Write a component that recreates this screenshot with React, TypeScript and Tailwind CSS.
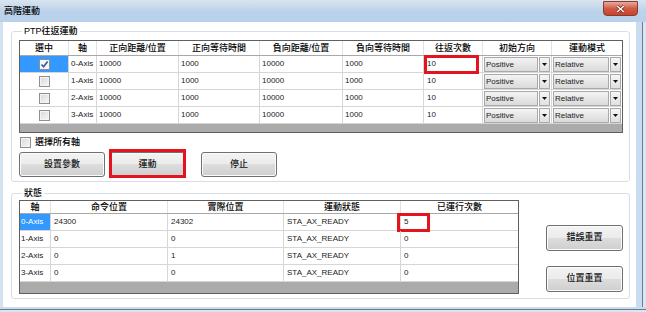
import clsx from "clsx";

const FONT = "font-['Liberation_Sans','Noto_Sans_CJK_TC',sans-serif]";
const BTN =
  "flex items-center justify-center rounded-[3px] border border-[#707070] bg-[linear-gradient(#f3f3f3,#ebebeb_50%,#dddddd_50%,#cfcfcf)] text-[9px] font-medium text-[#111] shadow-[inset_0_0_0_1px_#fbfbfb]";

const ptpHeads = [
  "選中",
  "軸",
  "正向距離/位置",
  "正向等待時間",
  "負向距離/位置",
  "負向等待時間",
  "往返次數",
  "初始方向",
  "運動模式",
];
const ptpW = [
  "w-[49px]",
  "w-[28px]",
  "w-[82px]",
  "w-[81px]",
  "w-[83px]",
  "w-[81px]",
  "w-[59px]",
  "w-[69px]",
  "flex-1",
];

const stHeads = ["軸", "命令位置", "實際位置", "運動狀態", "已運行次數"];
const stW = ["w-[31px]", "w-[117px]", "w-[116px]", "w-[117px]", "flex-1"];
const stRows = [
  ["0-Axis", "24300", "24302", "STA_AX_READY", "5"],
  ["1-Axis", "0", "0", "STA_AX_READY", "0"],
  ["2-Axis", "0", "1", "STA_AX_READY", "0"],
  ["3-Axis", "0", "0", "STA_AX_READY", "0"],
];

function CheckBox({ checked = false }: { checked?: boolean }) {
  return (
    <span
      className={clsx(
        "flex h-[11px] w-[11px] items-center justify-center border border-[#8e8f8f]",
        checked
          ? "bg-[#f4f6fa]"
          : "bg-gradient-to-br from-[#d6d8dc] to-[#f8f8f8] shadow-[inset_0_0_0_1px_#f4f4f4]"
      )}
    >
      {checked && (
        <svg width="9" height="9" viewBox="0 0 9 9">
          <path
            d="M1.5 4.5 L3.6 6.8 L7.6 1.6"
            fill="none"
            stroke="#3a5a9c"
            strokeWidth="1.7"
          />
        </svg>
      )}
    </span>
  );
}

function Combo({ value }: { value: string }) {
  return (
    <div className="flex h-[15px] w-full gap-[1px]">
      <span className="flex-1 border border-[#a9a9a9] bg-gradient-to-b from-[#f4f4f4] to-[#dadada] pl-[1px] text-[8px] leading-[13px] text-[#222]">
        {value}
      </span>
      <span className="flex w-[11px] items-center justify-center border border-[#a9a9a9] bg-gradient-to-b from-[#f6f6f6] to-[#e0e0e0]">
        <svg width="5" height="3" viewBox="0 0 5 3">
          <path d="M0 0h5L2.5 3z" fill="#111" />
        </svg>
      </span>
    </div>
  );
}

function RedMark({ className }: { className: string }) {
  return (
    <span
      className={clsx(
        "pointer-events-none absolute border-[3px] border-[#e3141d]",
        className
      )}
    />
  );
}

function PtpGrid() {
  return (
    <div className="flex h-[93px] w-[604px] flex-col border border-[#5f5f5f] bg-[#ababab]">
      <div className="flex h-[15px] border-b border-[#a8a8a8] bg-white">
        {ptpHeads.map((h, i) => (
          <div
            key={h}
            className={clsx(
              "text-center text-[9px] font-medium leading-[14px]",
              ptpW[i],
              i < 8 && "border-r border-[#e2e2e2]"
            )}
          >
            {h}
          </div>
        ))}
      </div>
      {[0, 1, 2, 3].map((r) => (
        <div
          key={r}
          className="flex h-[17px] border-b border-[#d6d6d6] bg-white text-[8px] leading-[16px] text-[#222]"
        >
          <div
            className={clsx(
              "flex items-center justify-center border-r border-[#d6d6d6]",
              ptpW[0],
              r === 0 && "bg-[#3399ff]"
            )}
          >
            <CheckBox checked={r === 0} />
          </div>
          <div className={clsx("border-r border-[#d6d6d6] pl-[2px]", ptpW[1])}>
            {r}-Axis
          </div>
          <div className={clsx("border-r border-[#d6d6d6] pl-[2px]", ptpW[2])}>
            10000
          </div>
          <div className={clsx("border-r border-[#d6d6d6] pl-[2px]", ptpW[3])}>
            1000
          </div>
          <div className={clsx("border-r border-[#d6d6d6] pl-[2px]", ptpW[4])}>
            10000
          </div>
          <div className={clsx("border-r border-[#d6d6d6] pl-[2px]", ptpW[5])}>
            1000
          </div>
          <div
            className={clsx(
              "relative border-r border-[#d6d6d6] pl-[3px]",
              ptpW[6]
            )}
          >
            10
            {r === 0 && (
              <RedMark className="-top-[1px] left-0 h-[19px] w-[55px]" />
            )}
          </div>
          <div
            className={clsx(
              "flex items-center border-r border-[#d6d6d6] px-[1px]",
              ptpW[7]
            )}
          >
            <Combo value="Positive" />
          </div>
          <div className={clsx("flex items-center px-[1px]", ptpW[8])}>
            <Combo value="Relative" />
          </div>
        </div>
      ))}
    </div>
  );
}

function StatusGrid() {
  return (
    <div className="flex h-[94px] w-[500px] flex-col border border-[#5f5f5f] bg-[#ababab]">
      <div className="flex h-[13px] border-b border-[#a8a8a8] bg-white">
        {stHeads.map((h, i) => (
          <div
            key={h}
            className={clsx(
              "text-center text-[9px] font-medium leading-[12px]",
              stW[i],
              i < 4 && "border-r border-[#e2e2e2]"
            )}
          >
            {h}
          </div>
        ))}
      </div>
      {stRows.map((row, r) => (
        <div
          key={r}
          className="flex h-[17px] border-b border-[#d6d6d6] bg-white text-[8px] leading-[16px] text-[#222]"
        >
          {row.map((c, i) => (
            <div
              key={i}
              className={clsx(
                "relative",
                stW[i],
                i < 4 && "border-r border-[#d6d6d6]",
                i === 0 ? "pl-[1px]" : "pl-[3px]",
                i === 0 && r === 0 && "bg-[#3399ff] text-white"
              )}
            >
              {c}
              {i === 4 && r === 0 && (
                <RedMark className="-left-[4px] -top-[1px] h-[19px] w-[33px]" />
              )}
            </div>
          ))}
        </div>
      ))}
    </div>
  );
}

function TitleBar() {
  return (
    <div className="flex h-[22px] bg-gradient-to-b from-[#d9e4ef] via-[#bcd3eb] to-[#b8d0ea]">
      <span className="self-center pl-[4px] text-[9px] font-medium leading-[12px] text-black">
        高階運動
      </span>
      <div className="ml-auto mr-[8px] mt-[1px] flex h-[15px] w-[35px] items-center justify-center rounded-b-[4px] border border-[#8a3b30] bg-gradient-to-b from-[#e9a99b] via-[#d15a45] to-[#c7432c]">
        <svg width="9" height="8" viewBox="0 0 9 8">
          <path
            d="M1 1 L8 7 M8 1 L1 7"
            stroke="#5a1a12"
            strokeWidth="2.6"
          />
          <path d="M1 1 L8 7 M8 1 L1 7" stroke="#fff" strokeWidth="1.6" />
        </svg>
      </div>
    </div>
  );
}

export default function App() {
  return (
    <div
      className={clsx(
        "flex h-[312px] w-[646px] flex-col overflow-hidden bg-[#c5d9ef] text-black",
        FONT
      )}
    >
      <TitleBar />
      <div className="flex h-[285px]">
        <div className="w-[3px] bg-[#d4e3f2]" />
        <div className="flex w-[633px] flex-col bg-white pl-[8px]">
          <fieldset className="mt-[2px] w-[619px] rounded-[3px] border border-[#d5dfe5] pb-[4px] pl-[7px]">
            <legend className="ml-[3px] px-[2px] text-[9px] font-medium leading-[14px]">
              PTP往返運動
            </legend>
            <div className="pt-[2px]">
              <PtpGrid />
            </div>
            <div className="mt-[2px] flex h-[14px] items-center gap-[4px] pl-[1px]">
              <CheckBox />
              <span className="text-[9px] font-medium leading-[12px]">
                選擇所有軸
              </span>
            </div>
            <div className="mt-[3px] flex h-[25px]">
              <div className={clsx(BTN, "w-[86px]")}>設置參數</div>
              <div className="relative ml-[5px]">
                <div className={clsx(BTN, "h-[25px] w-[75px]")}>運動</div>
                <RedMark className="-left-[1px] -top-[3px] h-[29px] w-[77px]" />
              </div>
              <div className={clsx(BTN, "ml-[16px] w-[76px]")}>停止</div>
            </div>
          </fieldset>
          <fieldset className="mt-[4px] w-[619px] rounded-[3px] border border-[#d5dfe5] pb-[4px] pl-[7px]">
            <legend className="ml-[3px] px-[2px] text-[9px] font-medium leading-[14px]">
              狀態
            </legend>
            <div className="flex">
              <StatusGrid />
              <div className="ml-[27px] flex flex-col pt-[25px]">
                <div className={clsx(BTN, "h-[26px] w-[77px]")}>錯誤重置</div>
                <div className={clsx(BTN, "mt-[15px] h-[26px] w-[77px]")}>
                  位置重置
                </div>
              </div>
            </div>
          </fieldset>
        </div>
        <div className="flex w-[10px]">
          <span className="w-[6px] bg-[#c9dcf0]" />
          <span className="w-[1px] bg-[#6c7c8e]" />
          <span className="flex-1 bg-[#dbe5f0]" />
        </div>
      </div>
      <div className="flex h-[5px] flex-col">
        <span className="h-[2px] bg-[#c9dcf0]" />
        <span className="h-[1px] bg-[#6c7c8e]" />
        <span className="flex-1 bg-[#dbe5f0]" />
      </div>
    </div>
  );
}
